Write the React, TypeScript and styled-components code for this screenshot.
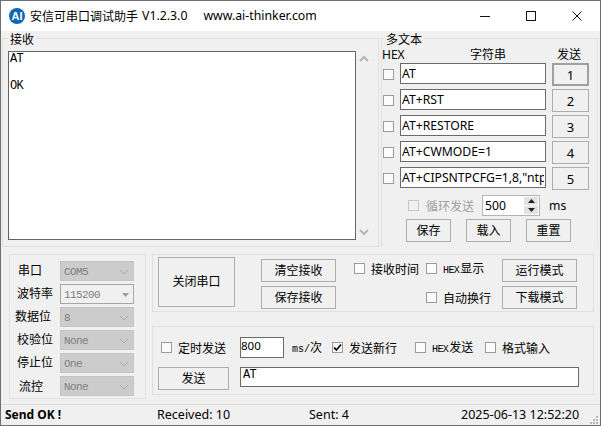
import React from "react";
import styled, { createGlobalStyle } from "styled-components";

const CJK = `"Noto Sans CJK SC", sans-serif`;
const UI = `"Noto Sans", "Noto Sans CJK SC", sans-serif`;
const MONO = `"Liberation Mono", "Noto Sans CJK SC", monospace`;

const Global = createGlobalStyle`
  html, body { margin: 0; padding: 0; background: #f0f0f0; }
  * { box-sizing: border-box; }
`;

const Window = styled.div`
  width: 601px;
  height: 426px;
  border: 1px solid #6f6f6f;
  background: #f0f0f0;
  color: #000;
  font: 12px/16px ${UI};
  display: flex;
  flex-direction: column;
  overflow: hidden;
`;

const TitleBar = styled.div`
  height: 30px;
  flex: none;
  background: #fff;
  display: flex;
  align-items: center;
  padding-left: 8px;
`;
const TitleCjk = styled.span`
  margin-left: 5px;
  font: 12px/16px ${CJK};
`;
const TitleLatin = styled.span`
  margin-left: ${(p: { $gap: number }) => p.$gap}px;
  font: 12.3px/16px ${UI};
  white-space: pre;
`;
const Controls = styled.div`
  margin-left: auto;
  display: flex;
`;
const Control = styled.div`
  width: 46px;
  height: 30px;
  display: flex;
  align-items: center;
  justify-content: center;
`;

const TopRow = styled.div`
  display: flex;
  flex: none;
  margin: 7px 0 0 1px;
`;
const Frame = styled.div`
  position: relative;
  border: 1px solid #e0e0e0;
`;
const Legend = styled.span`
  position: absolute;
  top: -7px;
  left: ${(p: { $left: number }) => p.$left}px;
  padding: 0 2px;
  background: #f0f0f0;
  font: 12px/13px ${CJK};
`;
const ReceiveFrame = styled(Frame)`
  width: 377px;
  height: 209px;
  display: flex;
  padding: 12px 0 0 5px;
`;
const ReceiveBox = styled.div`
  width: 348px;
  height: 189px;
  background: #fff;
  border: 1px solid #646464;
  padding: 1px 1px;
  font: 12px/13.5px ${MONO};
  letter-spacing: -0.6px;
  white-space: pre;
`;
const ScrollGutter = styled.div`
  width: 16px;
  height: 189px;
  display: flex;
  flex-direction: column;
  justify-content: space-between;
  align-items: center;
  padding: 4px 0 4px;
`;

const MultiFrame = styled(Frame)`
  width: 217px;
  height: 209px;
  margin-left: 2px;
  border-bottom-color: transparent;
  border-right-color: #e8e8e8;
`;
const HeaderRow = styled.div`
  display: flex;
  height: 15px;
  margin-top: 9px;
  line-height: 14px;
`;
const HeaderCell = styled.span`
  width: ${(p: { $w: number }) => p.$w}px;
  flex: none;
  font: 12px/14px ${UI};
`;
const StringList = styled.div`
  display: flex;
  flex-direction: column;
`;
const StringRow = styled.div`
  display: flex;
  height: 26px;
  align-items: flex-start;
  padding-left: 1px;
`;
const BoxSlot = styled.div`
  width: 17px;
  padding-top: 6px;
  flex: none;
`;
const TextField = styled.input`
  width: 146px;
  height: 21px;
  flex: none;
  border: 1px solid #6a6a6a;
  background: #fff;
  padding: 0 1px;
  outline: none;
  color: #000;
  font: 12.2px/19px ${UI};
`;
const Button = styled.button<{ $w: number; $h?: number; $strong?: boolean }>`
  width: ${(p) => p.$w}px;
  height: ${(p) => p.$h ?? 23}px;
  flex: none;
  padding: 0 0 2px;
  background: #f0f0f0;
  border: ${(p) => (p.$strong ? "2px solid #a0a0a0" : "1px solid #adadad")};
  color: #000;
  font: 12px/16px ${CJK};
`;
const NumberButton = styled(Button)`
  margin-left: 6px;
  padding: 0;
  font: 13px/16px ${UI};
`;

const LoopRow = styled.div`
  display: flex;
  align-items: center;
  height: 21px;
  margin-top: 2px;
  padding-left: 26px;
`;
const LoopLabel = styled.span`
  margin-left: 7px;
  width: 56px;
  flex: none;
  color: #a0a0a0;
  font: 12px/16px ${CJK};
`;
const Spin = styled.div`
  width: 58px;
  height: 21px;
  border: 1px solid #b4b4b4;
  background: #fff;
  display: flex;
  align-items: stretch;
  padding: 1px;
  font: 12.2px/18px ${UI};
`;
const SpinValue = styled.span`
  flex: 1;
  padding-left: 1px;
`;
const SpinArrows = styled.div`
  width: 14px;
  display: flex;
  flex-direction: column;
  gap: 1px;
`;
const SpinArrow = styled.div`
  flex: 1;
  background: #e2e2e2;
  display: flex;
  align-items: center;
  justify-content: center;
`;
const Unit = styled.span`
  margin-left: 9px;
  font: 12.2px/16px ${UI};
`;
const ActionRow = styled.div`
  display: flex;
  gap: 15px;
  margin-top: 3px;
  padding-left: 24px;
`;

const BottomRow = styled.div`
  display: flex;
  flex: none;
  margin: 7px 0 0 8px;
`;
const PortFrame = styled(Frame)`
  width: 137px;
  height: 145px;
  padding-top: 6px;
  display: grid;
  grid-template-columns: 50px 74px;
  grid-auto-rows: 23px;
`;
const PortLabel = styled.span<{ $indent: number; $drop?: number }>`
  padding-left: ${(p) => p.$indent}px;
  padding-top: ${(p) => p.$drop ?? 0}px;
  font: 12px/18px ${CJK};
  white-space: nowrap;
`;
const Combo = styled.div<{ $active?: boolean }>`
  width: 74px;
  height: 20px;
  display: flex;
  align-items: center;
  justify-content: space-between;
  padding: 1px 4px 0 3px;
  background: ${(p) => (p.$active ? "#f0f0f0" : "#cccccc")};
  border: 1px solid ${(p) => (p.$active ? "#a6a6a6" : "#c4c4c4")};
  color: #7d7d7d;
  font: 11px/14px ${MONO};
  letter-spacing: -0.6px;
`;

const RightColumn = styled.div`
  display: flex;
  flex-direction: column;
  gap: 14px;
  margin-left: 6px;
`;
const ControlFrame = styled(Frame)`
  width: 442px;
  height: 58px;
  display: flex;
  padding: 2px 0 0 5px;
`;
const ControlGrid = styled.div`
  display: grid;
  grid-template-columns: 93px 72px 76px 75px;
  grid-auto-rows: 23px;
  row-gap: 4px;
  margin: 2px 0 0 26px;
`;
const Check = styled.label<{ $w?: number; $raise?: boolean }>`
  display: flex;
  align-items: center;
  width: ${(p) => (p.$w ? `${p.$w}px` : "auto")};
  flex: none;
  gap: 6px;
  padding-bottom: ${(p) => (p.$raise ? 4 : 0)}px;
  font: 12px/16px ${CJK};
  white-space: nowrap;
`;
const Box = styled.span<{ $off?: boolean }>`
  width: 11px;
  height: 11px;
  flex: none;
  display: flex;
  align-items: center;
  justify-content: center;
  border: 1px solid ${(p) => (p.$off ? "#c6c6c6" : "#9c9c9c")};
  background: ${(p) => (p.$off ? "#f0f0f0" : "#fbfbfb")};
`;
const Tiny = styled.span`
  font: 10px/12px ${MONO};
  letter-spacing: -0.6px;
  margin-right: 1px;
`;

const SendFrame = styled(Frame)`
  width: 442px;
  height: 69px;
`;
const SendTop = styled.div`
  display: flex;
  align-items: center;
  height: 21px;
  margin-top: 10px;
  padding-left: 8px;
`;
const Interval = styled.input`
  width: 44px;
  height: 21px;
  flex: none;
  border: 1px solid #6a6a6a;
  background: #fff;
  padding: 0 0 5px 0;
  outline: none;
  color: #000;
  font: 11.5px/14px ${UI};
`;
const IntervalUnit = styled.span`
  width: 48px;
  flex: none;
  padding: 2px 0 0 8px;
  font: 10px/14px ${MONO};
`;
const IntervalGlyph = styled.span`
  font: 12px/14px ${CJK};
`;
const SendBottom = styled.div`
  display: flex;
  gap: 11px;
  margin-top: 9px;
  padding-left: 5px;
`;
const SendField = styled.input`
  width: 339px;
  height: 20px;
  flex: none;
  border: 1px solid #6a6a6a;
  background: #fff;
  padding: 0 1px 4px 2px;
  outline: none;
  color: #000;
  font: 12px/13px ${MONO};
  letter-spacing: -0.6px;
`;

const StatusBar = styled.div`
  flex: none;
  height: 22px;
  margin-top: 5px;
  padding: 0 0 2px 4px;
  border-top: 1px solid #dcdcdc;
  display: grid;
  grid-template-columns: 152px 152px 152px 129px 8px;
  align-items: center;
  font: 12.5px/16px ${UI};
  white-space: nowrap;
`;
const StatusStrong = styled.span`
  font-weight: 700;
  font-size: 12px;
`;
const Grip = styled.svg`
  margin-top: 10px;
`;

const Logo = () => (
  <svg width="16" height="16" viewBox="0 0 16 16">
    <circle cx="8" cy="8" r="8" fill="#0e68b4" />
    <text x="8" y="12" textAnchor="middle" fill="#fff" fontFamily="Liberation Sans" fontWeight="700" fontSize="11">
      AI
    </text>
  </svg>
);

const Chevron = ({ up }: { up?: boolean }) => (
  <svg width="10" height="7" viewBox="0 0 10 7">
    <path d={up ? "M1 6 L5 2 L9 6" : "M1 1 L5 5 L9 1"} fill="none" stroke="#b4b4b4" strokeWidth="2" />
  </svg>
);

const ComboArrow = ({ active }: { active?: boolean }) =>
  active ? (
    <svg width="7" height="4" viewBox="0 0 7 4">
      <path d="M0 0 H7 L3.5 4 Z" fill="#9a9a9a" />
    </svg>
  ) : (
    <svg width="10" height="6" viewBox="0 0 10 6">
      <path d="M1 1 L5 5 L9 1" fill="none" stroke="#a9a9a9" strokeWidth="1" />
    </svg>
  );

const CheckMark = () => (
  <svg width="9" height="9" viewBox="0 0 9 9">
    <path d="M1 4.5 L3.5 7 L8 1.5" fill="none" stroke="#111" strokeWidth="1.8" />
  </svg>
);

const strings = ["AT", "AT+RST", "AT+RESTORE", "AT+CWMODE=1", 'AT+CIPSNTPCFG=1,8,"ntp1.aliyun.com"'];

const ports = [
  { label: "串口", indent: 8, value: "COM5" },
  { label: "波特率", indent: 7, value: "115200", active: true },
  { label: "数据位", indent: 5, value: "8" },
  { label: "校验位", indent: 7, value: "None" },
  { label: "停止位", indent: 7, value: "One" },
  { label: "流控", indent: 9, value: "None", drop: 1 },
];

export default function App() {
  return (
    <>
      <Global />
      <Window>
        <TitleBar>
          <Logo />
          <TitleCjk>安信可串口调试助手</TitleCjk>
          <TitleLatin $gap={4}>V1.2.3.0</TitleLatin>
          <TitleLatin $gap={16}>www.ai-thinker.com</TitleLatin>
          <Controls>
            <Control>
              <svg width="10" height="10" viewBox="0 0 10 10">
                <path d="M0 5.5 H10" stroke="#111" strokeWidth="1" />
              </svg>
            </Control>
            <Control>
              <svg width="10" height="10" viewBox="0 0 10 10">
                <rect x="0.5" y="0.5" width="9" height="9" fill="none" stroke="#111" />
              </svg>
            </Control>
            <Control>
              <svg width="10" height="10" viewBox="0 0 10 10">
                <path d="M0.5 0.5 L9.5 9.5 M9.5 0.5 L0.5 9.5" stroke="#111" strokeWidth="1" />
              </svg>
            </Control>
          </Controls>
        </TitleBar>

        <TopRow>
          <ReceiveFrame>
            <Legend $left={5}>接收</Legend>
            <ReceiveBox>{"AT\n\nOK"}</ReceiveBox>
            <ScrollGutter>
              <Chevron up />
              <Chevron />
            </ScrollGutter>
          </ReceiveFrame>

          <MultiFrame>
            <Legend $left={2}>多文本</Legend>
            <HeaderRow>
              <HeaderCell $w={88}>HEX</HeaderCell>
              <HeaderCell $w={87}>字符串</HeaderCell>
              <HeaderCell $w={30}>发送</HeaderCell>
            </HeaderRow>
            <StringList>
              {strings.map((s, i) => (
                <StringRow key={s}>
                  <BoxSlot>
                    <Box />
                  </BoxSlot>
                  <TextField readOnly value={s} />
                  <NumberButton $w={37} $strong={i === 0}>
                    {i + 1}
                  </NumberButton>
                </StringRow>
              ))}
            </StringList>
            <LoopRow>
              <Box $off />
              <LoopLabel>循环发送</LoopLabel>
              <Spin>
                <SpinValue>500</SpinValue>
                <SpinArrows>
                  <SpinArrow>
                    <svg width="7" height="4" viewBox="0 0 7 4">
                      <path d="M0 4 H7 L3.5 0 Z" fill="#222" />
                    </svg>
                  </SpinArrow>
                  <SpinArrow>
                    <svg width="7" height="4" viewBox="0 0 7 4">
                      <path d="M0 0 H7 L3.5 4 Z" fill="#222" />
                    </svg>
                  </SpinArrow>
                </SpinArrows>
              </Spin>
              <Unit>ms</Unit>
            </LoopRow>
            <ActionRow>
              <Button $w={45}>保存</Button>
              <Button $w={45}>载入</Button>
              <Button $w={45}>重置</Button>
            </ActionRow>
          </MultiFrame>
        </TopRow>

        <BottomRow>
          <PortFrame>
            {ports.map((p) => (
              <React.Fragment key={p.label}>
                <PortLabel $indent={p.indent} $drop={p.drop}>
                  {p.label}
                </PortLabel>
                <Combo $active={p.active}>
                  {p.value}
                  <ComboArrow active={p.active} />
                </Combo>
              </React.Fragment>
            ))}
          </PortFrame>

          <RightColumn>
            <ControlFrame>
              <Button $w={77} $h={50}>
                关闭串口
              </Button>
              <ControlGrid>
                <Button $w={75}>清空接收</Button>
                <Check $raise>
                  <Box />
                  接收时间
                </Check>
                <Check $raise>
                  <Box />
                  <span>
                    <Tiny>HEX</Tiny>显示
                  </span>
                </Check>
                <Button $w={75}>运行模式</Button>
                <Button $w={75}>保存接收</Button>
                <span />
                <Check>
                  <Box />
                  自动换行
                </Check>
                <Button $w={75}>下载模式</Button>
              </ControlGrid>
            </ControlFrame>

            <SendFrame>
              <SendTop>
                <Check $w={79}>
                  <Box />
                  定时发送
                </Check>
                <Interval readOnly value="800" />
                <IntervalUnit>
                  ms/<IntervalGlyph>次</IntervalGlyph>
                </IntervalUnit>
                <Check $w={83}>
                  <Box>
                    <CheckMark />
                  </Box>
                  发送新行
                </Check>
                <Check $w={70}>
                  <Box />
                  <span>
                    <Tiny>HEX</Tiny>发送
                  </span>
                </Check>
                <Check>
                  <Box />
                  格式输入
                </Check>
              </SendTop>
              <SendBottom>
                <Button $w={71}>发送</Button>
                <SendField readOnly value="AT" />
              </SendBottom>
            </SendFrame>
          </RightColumn>
        </BottomRow>

        <StatusBar>
          <StatusStrong>Send OK !</StatusStrong>
          <span>Received: 10</span>
          <span>Sent: 4</span>
          <span>2025-06-13 12:52:20</span>
          <Grip width="8" height="8" viewBox="0 0 8 8">
            <path d="M6 0h2v2H6zM3 3h2v2H3zM6 3h2v2H6zM0 6h2v2H0zM3 6h2v2H3zM6 6h2v2H6z" fill="#b8b8b8" />
          </Grip>
        </StatusBar>
      </Window>
    </>
  );
}
